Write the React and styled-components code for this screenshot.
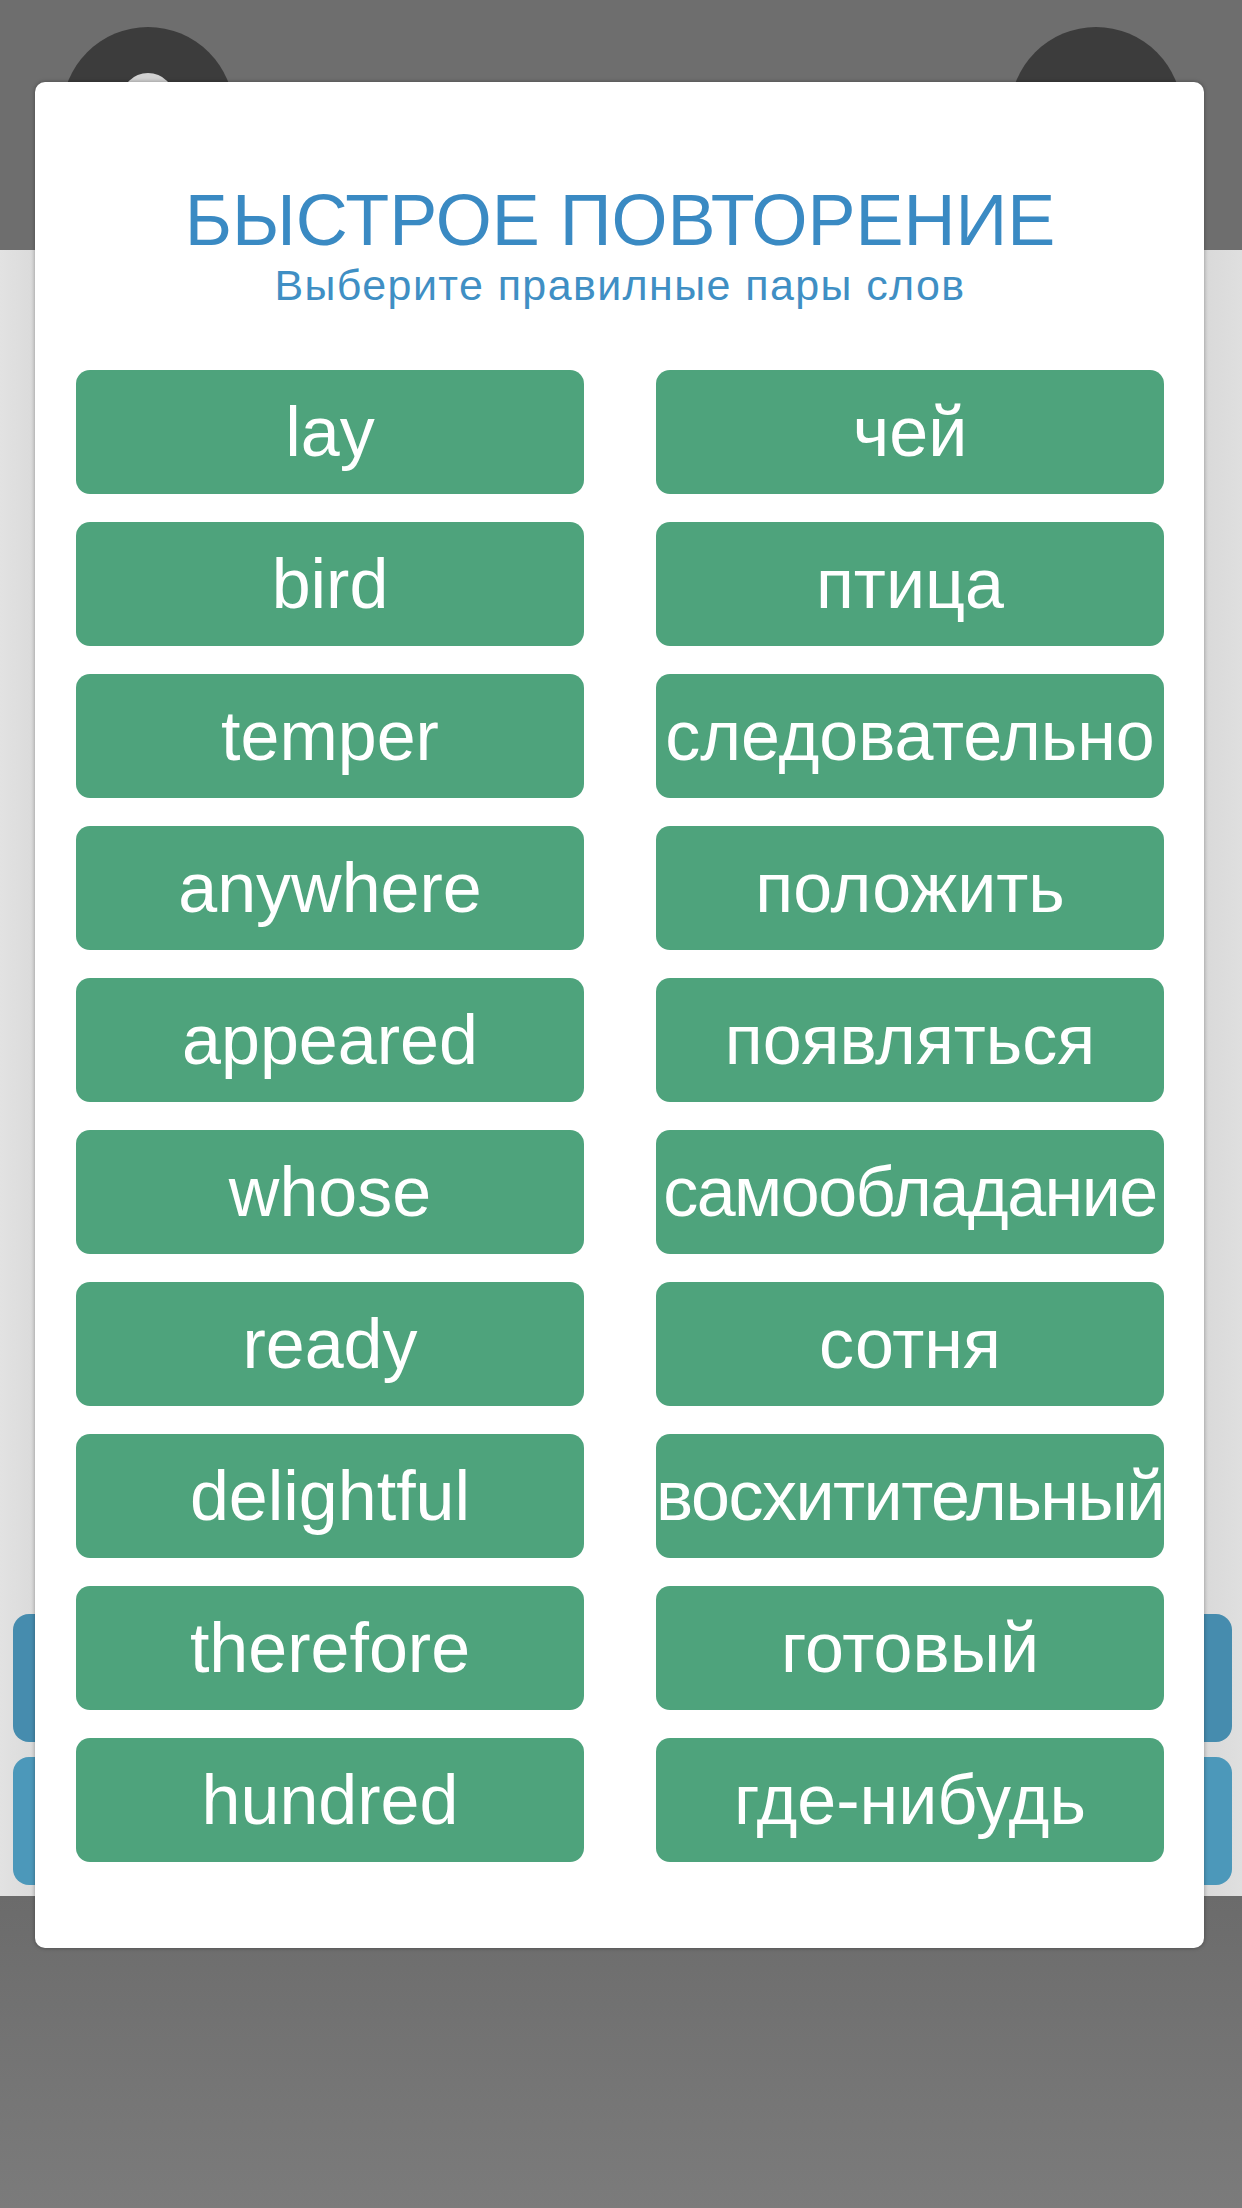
import styled, { createGlobalStyle } from "styled-components"

const GlobalStyle = createGlobalStyle`
  html, body {
    margin: 0;
    padding: 0;
    background: #dedede;
  }
  body {
    font-family: "Liberation Sans", Arial, "Noto Sans", sans-serif;
  }
`

// third item: long words squeezed a little so they fit the button
const pairs = [
  ["lay", "чей"],
  ["bird", "птица"],
  ["temper", "следовательно"],
  ["anywhere", "положить"],
  ["appeared", "появляться"],
  ["whose", "самообладание", true],
  ["ready", "сотня"],
  ["delightful", "восхитительный", true],
  ["therefore", "готовый"],
  ["hundred", "где-нибудь"],
]

const {Screen, Page, Header, RoundButton, RoundIcon, Content, ActionRow, ActionButton, Footer} = {
  Screen: styled.div`
    position: relative;
    width: 1242px;
    height: 2208px;
    overflow: hidden;
  `,
  Page: styled.div`
    display: flex;
    flex-direction: column;
    height: 100%;
  `,
  Header: styled.div`
    height: 250px;
    flex-shrink: 0;
    background: #6e6e6e;
    display: flex;
    justify-content: space-between;
    align-items: flex-start;
    padding: 27px 60px 0 62px;
    box-sizing: border-box;
  `,
  RoundButton: styled.div`
    width: 172px;
    height: 172px;
    border-radius: 50%;
    background: #3c3c3c;
    display: flex;
    justify-content: center;
    align-items: flex-end;
    overflow: hidden;
  `,
  RoundIcon: styled.div`
    width: 54px;
    height: 54px;
    margin-bottom: 72px;
    border-radius: 50%;
    background: #d2d2d2;
  `,
  Content: styled.div`
    flex: 1;
    background: linear-gradient(90deg, #e2e2e2 0%, #dadada 3%, #dcdcdc 50%, #d9d9d9 97%, #dfdfdf 100%);
    display: flex;
    flex-direction: column;
    justify-content: flex-end;
    gap: 15px;
    padding: 0 10px 11px 13px;
  `,
  ActionRow: styled.div`
    display: grid;
    grid-template-columns: 1fr 1fr;
    gap: 40px;
  `,
  ActionButton: styled.div`
    height: 128px;
    border-radius: 16px;
    background: ${p => p.$tone};
  `,
  Footer: styled.div`
    height: 312px;
    flex-shrink: 0;
    background: linear-gradient(180deg, #6b6b6b 0%, #727272 40%, #7b7b7b 100%);
  `,
}

const {Modal, Title, Subtitle, PairGrid, WordButton} = {
  Modal: styled.div`
    position: absolute;
    top: 82px;
    left: 35px;
    width: 1169px;
    box-sizing: border-box;
    padding: 102px 40px 86px 41px;
    background: #fff;
    border-radius: 10px;
    box-shadow: 0 0 4px rgba(0,0,0,.35);
    text-align: center;
  `,
  Title: styled.h1`
    margin: 0;
    font-size: 72px;
    line-height: 72px;
    font-weight: 400;
    color: #3a8ac3;
  `,
  Subtitle: styled.p`
    margin: 8px 0 0;
    font-size: 43px;
    line-height: 43px;
    letter-spacing: 1.4px;
    color: #3f8fc4;
  `,
  PairGrid: styled.div`
    margin-top: 63px;
    display: grid;
    grid-template-columns: 1fr 1fr;
    column-gap: 72px;
    row-gap: 28px;
  `,
  WordButton: styled.button`
    height: 124px;
    border: none;
    border-radius: 14px;
    background: #4ea37c;
    color: #fff;
    font-family: "Liberation Sans", Arial, sans-serif;
    font-size: 70px;
    letter-spacing: ${p => (p.$tight ? "-1.5px" : "0")};
    padding: 0;
    display: flex;
    align-items: center;
    justify-content: center;
    white-space: nowrap;
    overflow: hidden;
  `,
}

export default function App() {
  return (
    <Screen>
      <GlobalStyle />
      <Page>
        <Header>
          <RoundButton><RoundIcon /></RoundButton>
          <RoundButton />
        </Header>
        <Content>
          <ActionRow>
            <ActionButton $tone="#468cae" />
            <ActionButton $tone="#468cae" />
          </ActionRow>
          <ActionRow>
            <ActionButton $tone="#4c98ba" />
            <ActionButton $tone="#4c98ba" />
          </ActionRow>
        </Content>
        <Footer />
      </Page>
      <Modal>
        <Title>БЫСТРОЕ ПОВТОРЕНИЕ</Title>
        <Subtitle>Выберите правилные пары слов</Subtitle>
        <PairGrid>
          {pairs.flatMap(([en, ru, tight]) => [
            <WordButton key={en}>{en}</WordButton>,
            <WordButton key={ru} $tight={tight}>{ru}</WordButton>,
          ])}
        </PairGrid>
      </Modal>
    </Screen>
  )
}
